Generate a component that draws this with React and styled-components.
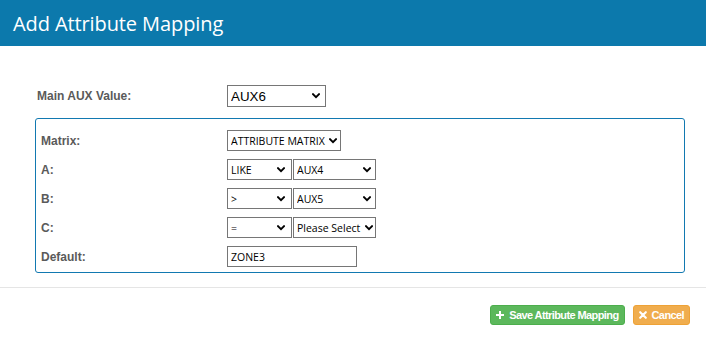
import React from "react";
import styled, { createGlobalStyle } from "styled-components";

const Global = createGlobalStyle`
  html, body { margin: 0; padding: 0; background: #fff; }
  body { font-family: "Liberation Sans", Arial, sans-serif; }
`;

const Page = styled.div`
  width: 706px;
  min-height: 343px;
  display: flex;
  flex-direction: column;
  background: #fff;
`;

const Header = styled.div`
  height: 46px;
  background: #0c79ac;
  display: flex;
  align-items: center;
  padding-left: 13px;
  box-sizing: border-box;
`;

const Title = styled.h1`
  margin: 0;
  font-family: "Open Sans", sans-serif;
  font-weight: 400;
  font-size: 20px;
  color: #fff;
  letter-spacing: -0.1px;
`;

const Body = styled.div`
  padding: 39px 21px 0 35px;
`;

const MainRow = styled.div`
  display: grid;
  grid-template-columns: 190px auto;
  align-items: center;
  height: 22px;
  padding-left: 2px;
`;

const Label = styled.label`
  font-family: "Liberation Sans", Arial, sans-serif;
  font-weight: 700;
  font-size: 12px;
  color: #5a5a5a;
`;

const Fieldset = styled.div`
  margin-top: 11px;
  border: 1px solid #1279b1;
  border-radius: 3px;
  padding: 11px 5px 5px 5px;
  display: grid;
  grid-template-columns: 186px auto;
  row-gap: 8px;
  align-items: center;
`;

const Controls = styled.div`
  display: flex;
  gap: 1px;
  align-items: center;
`;

const SelectWrap = styled.div`
  position: relative;
  display: inline-flex;
  width: ${(p) => p.$w}px;
  height: ${(p) => p.$h || 21}px;
`;

const Select = styled.select`
  appearance: none;
  -webkit-appearance: none;
  width: 100%;
  height: 100%;
  margin: 0;
  box-sizing: border-box;
  border: 1px solid #767676;
  border-radius: 0;
  background: #fff;
  color: #000;
  padding: 0 14px 0 3px;
  font-family: ${(p) => (p.$big ? '"Liberation Sans", Arial, sans-serif' : '"Open Sans", sans-serif')};
  font-size: ${(p) => (p.$big ? "13.33px" : "10.5px")};
  outline: none;
`;

const Chevron = styled.svg`
  position: absolute;
  right: ${(p) => p.$r || 6}px;
  top: 50%;
  margin-top: -3px;
  width: 8px;
  height: 6px;
  pointer-events: none;
`;

const TextInput = styled.input`
  width: 130px;
  height: 21px;
  box-sizing: border-box;
  margin: 0;
  border: 1px solid #767676;
  border-radius: 0;
  padding: 0 3px;
  font-family: "Open Sans", sans-serif;
  font-size: 10.5px;
  color: #000;
  outline: none;
`;

const Separator = styled.div`
  margin-top: 14px;
  border-top: 1px solid #e5e5e5;
`;

const Footer = styled.div`
  display: flex;
  justify-content: flex-end;
  gap: 8px;
  padding: 17px 16px 0 0;
`;

const Button = styled.button`
  display: inline-flex;
  align-items: center;
  gap: 5px;
  height: 20px;
  box-sizing: border-box;
  padding: 0 5px 0 5px;
  border-radius: 3px;
  border: 1px solid ${(p) => (p.$variant === "warning" ? "#eea236" : "#4cae4c")};
  background: ${(p) => (p.$variant === "warning" ? "#f0ad4e" : "#5cb85c")};
  color: #fff;
  font-family: "Liberation Sans", Arial, sans-serif;
  font-weight: 700;
  font-size: 11px;
  letter-spacing: -0.6px;
  cursor: pointer;
`;

const Icon = styled.svg`
  width: 8px;
  height: 8px;
  flex: none;
`;

function Dropdown({ w, big, value, options, r }) {
  return (
    <SelectWrap $w={w} $h={big ? 22 : 21}>
      <Select $big={big} defaultValue={value}>
        {options.map((o) => (
          <option key={o}>{o}</option>
        ))}
      </Select>
      <Chevron $r={r} viewBox="0 0 8 6">
        <path d="M1 1.2 L4 4.2 L7 1.2" fill="none" stroke="#000" strokeWidth="1.9" strokeLinecap="square" />
      </Chevron>
    </SelectWrap>
  );
}

export default function App() {
  return (
    <>
      <Global />
      <Page>
        <Header>
          <Title>Add Attribute Mapping</Title>
        </Header>
        <Body>
          <MainRow>
            <Label>Main AUX Value:</Label>
            <Dropdown w={99} big value="AUX6" options={["AUX6"]} r={6} />
          </MainRow>
          <Fieldset>
            <Label>Matrix:</Label>
            <Controls>
              <Dropdown w={114} value="ATTRIBUTE MATRIX" options={["ATTRIBUTE MATRIX"]} r={4} />
            </Controls>
            <Label>A:</Label>
            <Controls>
              <Dropdown w={65} value="LIKE" options={["LIKE"]} r={7} />
              <Dropdown w={83} value="AUX4" options={["AUX4"]} r={5} />
            </Controls>
            <Label>B:</Label>
            <Controls>
              <Dropdown w={65} value=">" options={[">"]} r={7} />
              <Dropdown w={83} value="AUX5" options={["AUX5"]} r={5} />
            </Controls>
            <Label>C:</Label>
            <Controls>
              <Dropdown w={65} value="=" options={["="]} r={7} />
              <Dropdown w={83} value="Please Select" options={["Please Select"]} r={3} />
            </Controls>
            <Label>Default:</Label>
            <Controls>
              <TextInput defaultValue="ZONE3" />
            </Controls>
          </Fieldset>
        </Body>
        <Separator />
        <Footer>
          <Button>
            <Icon viewBox="0 0 8 8">
              <path d="M3 0h2v3h3v2H5v3H3V5H0V3h3z" fill="#fff" />
            </Icon>
            Save Attribute Mapping
          </Button>
          <Button $variant="warning">
            <Icon viewBox="0 0 8 8">
              <path d="M1.2 1.2 L6.8 6.8 M6.8 1.2 L1.2 6.8" stroke="#fff" strokeWidth="2.1" strokeLinecap="round" />
            </Icon>
            Cancel
          </Button>
        </Footer>
      </Page>
    </>
  );
}
